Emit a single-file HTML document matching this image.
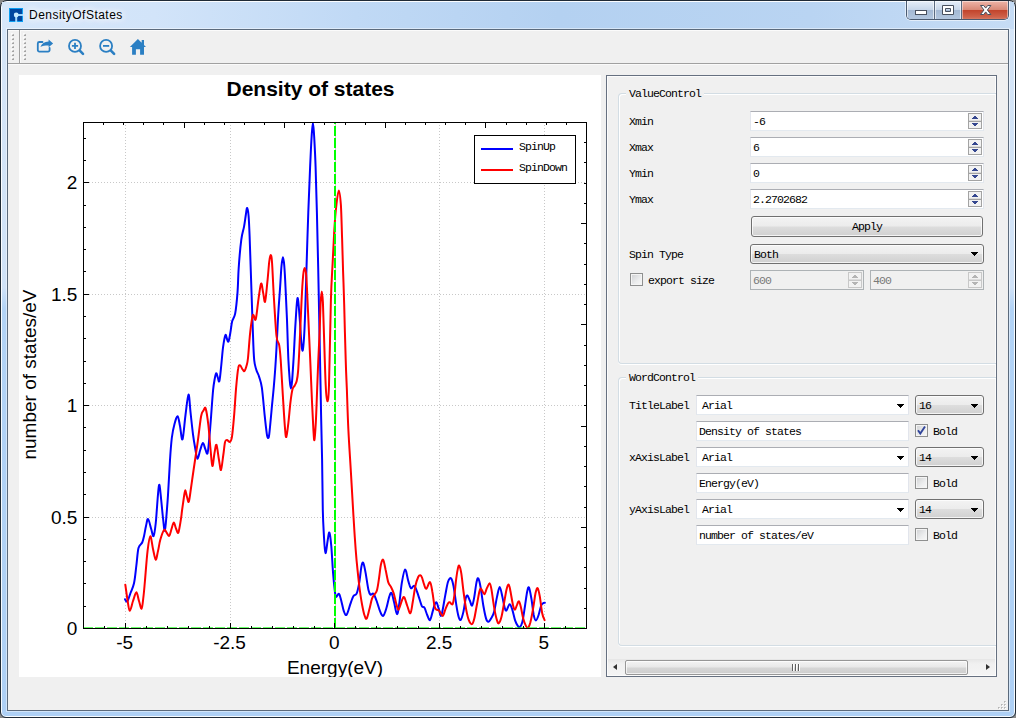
<!DOCTYPE html>
<html lang="en">
<head>
<meta charset="utf-8">
<title>DensityOfStates</title>
<style>
*{box-sizing:border-box;margin:0;padding:0}
html,body{width:1016px;height:718px;overflow:hidden;background:#8a8a8a}
body{position:relative;font-family:"Liberation Mono","DejaVu Sans Mono",monospace;font-size:12px;color:#000}
.abs{position:absolute}
#win{position:absolute;left:0;top:0;width:1016px;height:718px;border:1px solid #1f2a36;border-radius:7px 7px 6px 6px;
 background:linear-gradient(180deg,#d6e6f8 0%,#d0e2f7 40%,#b2d3f6 43%,#aed0f5 100%);
 box-shadow:inset 0 0 0 1px rgba(255,255,255,.9);overflow:hidden}
#tbar{position:absolute;left:2px;top:2px;width:1012px;height:27px;background:linear-gradient(90deg,#d6e7fa 0%,#d2e4f9 15%,#c0d9f5 35%,#b4d1f1 55%,#b9d4f2 80%,#c6dcf5 100%)}
#client{position:absolute;left:8px;top:30px;width:1000px;height:680px;background:#f0f0f0;box-shadow:0 0 0 1px #5b6a7c,0 0 0 2px rgba(255,255,255,.45)}
#title{position:absolute;left:29px;top:7px;font-family:"Liberation Sans",sans-serif;font-size:12px;line-height:16px;color:#000;letter-spacing:.47px;text-shadow:0 0 6px #fff,0 0 8px #fff,0 0 10px #fff}
.s{position:absolute;font-family:"Liberation Mono","DejaVu Sans Mono",monospace;font-size:11.5px;line-height:12px;letter-spacing:-0.9px;white-space:pre;color:#000}
.plot{position:absolute;left:19px;top:75px}
/* toolbar */
#tbline{position:absolute;left:8px;top:63px;width:1000px;height:1px;background:#a0a0a0}
.tsep{position:absolute;top:30px;width:1px;height:33px;background:#a0a0a0}
.grip{position:absolute;top:34px;width:2px;height:26px;background:repeating-linear-gradient(180deg,#b0b0b0 0,#b0b0b0 2px,transparent 2px,transparent 4px)}
/* right panel */
#frame{position:absolute;left:606px;top:75px;width:391px;height:602px;border:1px solid #667080;box-shadow:inset 0 0 0 1px #fcfcfc;background:#f0f0f0}
.gb{position:absolute;border:1px solid #d3dde4;border-radius:4px;box-shadow:inset 1px 1px 0 #fff, 0 1px 0 #fff}
.gbt{background:#f0f0f0;padding:0 2px 0 3px}
.spin{position:absolute;height:20px;background:#fff;border:1px solid #e2e5ec;border-top-color:#abadb3;border-bottom-color:#e3e9ef}
.spin.dis{background:#f0f0f0;border:1px solid #adb2b5}
.sb{position:absolute;right:1px;top:2px;width:14px;height:16px;border:1px solid #a9a9a9;background:#f3f3f3}
.sb:before{content:"";position:absolute;left:0;top:7px;width:12px;height:1px;background:#a9a9a9}
.sb i{position:absolute;left:3px;width:0;height:0;border-left:3.5px solid transparent;border-right:3.5px solid transparent}
.sb i.u{top:2px;border-bottom:4px solid #3a4f9a}
.sb i.d{top:10px;border-top:4px solid #3a4f9a}
.dis .sb{border-color:#c4c4c4;background:#f4f4f4}
.dis .sb:before{background:#c4c4c4}
.dis .sb i.u{border-bottom-color:#b0b0b0}
.dis .sb i.d{border-top-color:#b0b0b0}
.btn{position:absolute;border:1px solid #707070;border-radius:3px;background:linear-gradient(180deg,#f3f3f3 0%,#ececec 48%,#dddddd 52%,#d0d0d0 100%);box-shadow:inset 0 0 0 1px rgba(255,255,255,.75)}
.arr{position:absolute;width:0;height:0;border-left:3.5px solid transparent;border-right:3.5px solid transparent;border-top:4px solid #000}
.cb{position:absolute;width:13px;height:13px;border:1px solid #8e8f8f;background:linear-gradient(135deg,#cfd0d2 0%,#ecedee 60%,#f8f8f8 100%);box-shadow:inset 0 0 0 1px #f4f4f4}
.le{position:absolute;height:20px;background:#fff;border:1px solid #e2e5ec;border-top-color:#abadb3;border-bottom-color:#e3e9ef}
</style>
</head>
<body>
<div id="win"></div>
<div id="tbar"></div>
<div id="client"></div>
<svg class="abs" style="left:9px;top:8px" width="14" height="14" viewBox="0 0 14 14">
<rect x="0" y="0" width="14" height="14" fill="#0a9cf0"/><rect x="1" y="1" width="12" height="12" fill="#0046a0"/>
<rect x="7" y="6" width="7" height="2" fill="#9fd8ff"/><rect x="6.2" y="7" width="2" height="7" fill="#9fd8ff"/><circle cx="7.2" cy="7" r="2.4" fill="#c8ebff"/></svg>
<div id="title">DensityOfStates</div>
<div class="abs" style="left:906px;top:1px;width:103px;height:19px;border:1px solid #4a5a70;border-top:none;border-radius:0 0 5px 5px;overflow:hidden;box-shadow:0 1px 0 rgba(255,255,255,.55),1px 0 0 rgba(255,255,255,.55),-1px 0 0 rgba(255,255,255,.55)">
<div class="abs" style="left:0;top:0;width:27px;height:19px;background:linear-gradient(180deg,#e6eef8 0%,#c8d7ea 45%,#a4b9d4 50%,#b4c8e0 100%);box-shadow:inset 0 0 0 1px rgba(255,255,255,.6)"></div>
<div class="abs" style="left:27px;top:0;width:1px;height:19px;background:#5a6a80"></div>
<div class="abs" style="left:28px;top:0;width:26px;height:19px;background:linear-gradient(180deg,#e6eef8 0%,#c8d7ea 45%,#a4b9d4 50%,#b4c8e0 100%);box-shadow:inset 0 0 0 1px rgba(255,255,255,.6)"></div>
<div class="abs" style="left:54px;top:0;width:1px;height:19px;background:#5a6a80"></div>
<div class="abs" style="left:55px;top:0;width:46px;height:19px;background:linear-gradient(180deg,#eeb5a8 0%,#d98a78 45%,#c2452d 50%,#cf634c 85%,#d98873 100%);box-shadow:inset 0 0 0 1px rgba(255,255,255,.45)"></div>
<svg class="abs" style="left:0;top:0" width="101" height="19" viewBox="907 1 101 19">
<rect x="915.5" y="10.5" width="11" height="4" fill="#fff" stroke="#48505e"/>
<path d="M942.5 5.500h11v9h-11zM945.5 8.500v3h5v-3z" fill="#fff" fill-rule="evenodd" stroke="#48505e"/>
<path d="M980.500 5.500h3.200l2 2.600 2-2.600h3.200l-3.500 4.500 3.500 4.500h-3.200l-2-2.600-2 2.600h-3.200l3.500-4.500z" fill="#fff" stroke="#48505e" stroke-width="1" stroke-linejoin="round"/>
</svg></div>
<div class="abs" style="left:8px;top:30px;width:1000px;height:1px;background:#fbfbfb"></div><div id="tbline"></div><div class="abs" style="left:8px;top:64px;width:1000px;height:1px;background:#fafafa"></div>
<div class="tsep" style="left:19px"></div><div class="tsep" style="left:20px;background:#fafafa"></div>
<svg class="abs" style="left:11px;top:33px" width="4" height="28" viewBox="0 0 4 28" shape-rendering="crispEdges"><rect x="0" y="0" width="2" height="2" fill="#fafafa"/><rect x="2" y="1" width="1" height="1" fill="#b6b6b6"/><rect x="1" y="2" width="2" height="1" fill="#a4a4a4"/><rect x="1" y="1" width="1" height="1" fill="#dcdcdc"/><rect x="0" y="4" width="2" height="2" fill="#fafafa"/><rect x="2" y="5" width="1" height="1" fill="#b6b6b6"/><rect x="1" y="6" width="2" height="1" fill="#a4a4a4"/><rect x="1" y="5" width="1" height="1" fill="#dcdcdc"/><rect x="0" y="8" width="2" height="2" fill="#fafafa"/><rect x="2" y="9" width="1" height="1" fill="#b6b6b6"/><rect x="1" y="10" width="2" height="1" fill="#a4a4a4"/><rect x="1" y="9" width="1" height="1" fill="#dcdcdc"/><rect x="0" y="12" width="2" height="2" fill="#fafafa"/><rect x="2" y="13" width="1" height="1" fill="#b6b6b6"/><rect x="1" y="14" width="2" height="1" fill="#a4a4a4"/><rect x="1" y="13" width="1" height="1" fill="#dcdcdc"/><rect x="0" y="16" width="2" height="2" fill="#fafafa"/><rect x="2" y="17" width="1" height="1" fill="#b6b6b6"/><rect x="1" y="18" width="2" height="1" fill="#a4a4a4"/><rect x="1" y="17" width="1" height="1" fill="#dcdcdc"/><rect x="0" y="20" width="2" height="2" fill="#fafafa"/><rect x="2" y="21" width="1" height="1" fill="#b6b6b6"/><rect x="1" y="22" width="2" height="1" fill="#a4a4a4"/><rect x="1" y="21" width="1" height="1" fill="#dcdcdc"/><rect x="0" y="24" width="2" height="2" fill="#fafafa"/><rect x="2" y="25" width="1" height="1" fill="#b6b6b6"/><rect x="1" y="26" width="2" height="1" fill="#a4a4a4"/><rect x="1" y="25" width="1" height="1" fill="#dcdcdc"/></svg><svg class="abs" style="left:23px;top:33px" width="4" height="28" viewBox="0 0 4 28" shape-rendering="crispEdges"><rect x="0" y="0" width="2" height="2" fill="#fafafa"/><rect x="2" y="1" width="1" height="1" fill="#b6b6b6"/><rect x="1" y="2" width="2" height="1" fill="#a4a4a4"/><rect x="1" y="1" width="1" height="1" fill="#dcdcdc"/><rect x="0" y="4" width="2" height="2" fill="#fafafa"/><rect x="2" y="5" width="1" height="1" fill="#b6b6b6"/><rect x="1" y="6" width="2" height="1" fill="#a4a4a4"/><rect x="1" y="5" width="1" height="1" fill="#dcdcdc"/><rect x="0" y="8" width="2" height="2" fill="#fafafa"/><rect x="2" y="9" width="1" height="1" fill="#b6b6b6"/><rect x="1" y="10" width="2" height="1" fill="#a4a4a4"/><rect x="1" y="9" width="1" height="1" fill="#dcdcdc"/><rect x="0" y="12" width="2" height="2" fill="#fafafa"/><rect x="2" y="13" width="1" height="1" fill="#b6b6b6"/><rect x="1" y="14" width="2" height="1" fill="#a4a4a4"/><rect x="1" y="13" width="1" height="1" fill="#dcdcdc"/><rect x="0" y="16" width="2" height="2" fill="#fafafa"/><rect x="2" y="17" width="1" height="1" fill="#b6b6b6"/><rect x="1" y="18" width="2" height="1" fill="#a4a4a4"/><rect x="1" y="17" width="1" height="1" fill="#dcdcdc"/><rect x="0" y="20" width="2" height="2" fill="#fafafa"/><rect x="2" y="21" width="1" height="1" fill="#b6b6b6"/><rect x="1" y="22" width="2" height="1" fill="#a4a4a4"/><rect x="1" y="21" width="1" height="1" fill="#dcdcdc"/><rect x="0" y="24" width="2" height="2" fill="#fafafa"/><rect x="2" y="25" width="1" height="1" fill="#b6b6b6"/><rect x="1" y="26" width="2" height="1" fill="#a4a4a4"/><rect x="1" y="25" width="1" height="1" fill="#dcdcdc"/></svg>
<svg class="abs" style="left:30px;top:32px" width="124" height="30" viewBox="30 32 124 30">
<g fill="none" stroke="#2b7fc3" stroke-width="1.8" stroke-linecap="round" stroke-linejoin="round">
<path d="M42.500 42h-3.200a1.500 1.500 0 0 0 -1.500 1.500v6.600a1.500 1.500 0 0 0 1.500 1.500h8.800a1.500 1.500 0 0 0 1.500 -1.500v-2.200"/>
<circle cx="75" cy="45.900" r="6"/><path d="M71.900 45.900h6.200M75 42.800v6.200" stroke-linecap="butt"/><path d="M79.800 50.600l3.200 3.200" stroke-width="2.600"/>
<circle cx="106.100" cy="45.900" r="6"/><path d="M103 45.900h6.200" stroke-linecap="butt"/><path d="M110.900 50.600l3.200 3.200" stroke-width="2.600"/>
</g>
<path d="M40.400 46.900c1.200-3.600 4-5.400 8.200-5.500v-1.900l4.500 3.900-4.500 3.900v-1.900c-3.600 0-6.200.4-8.200 1.500z" fill="#2b7fc3"/>
<path d="M137.900 39l-8 8.100h2.200v7.600h3.800v-5.400h4.200v5.400h3.900v-7.600h2l-2-2v-5h-2.300v2.700z" fill="#2b7fc3"/>
</svg>
<svg class="plot" width="582" height="602" viewBox="19 75 582 602" shape-rendering="auto">
<rect x="19" y="75" width="582" height="602" fill="#fff"/>
<g stroke="#c8c8c8" stroke-width="1" stroke-dasharray="1 2" shape-rendering="crispEdges"><line x1="125.5" y1="122" x2="125.5" y2="628"/><line x1="230.5" y1="122" x2="230.5" y2="628"/><line x1="439.5" y1="122" x2="439.5" y2="628"/><line x1="544.5" y1="122" x2="544.5" y2="628"/><line x1="83" y1="182.5" x2="586" y2="182.5"/><line x1="83" y1="294.5" x2="586" y2="294.5"/><line x1="83" y1="405.5" x2="586" y2="405.5"/><line x1="83" y1="517.5" x2="586" y2="517.5"/></g>
<line x1="335.5" y1="122" x2="335.5" y2="628" stroke="#c8c8c8" shape-rendering="crispEdges"/>
<clipPath id="cp"><rect x="83" y="122" width="504" height="507"/></clipPath>
<g clip-path="url(#cp)" fill="none" stroke-width="2" stroke-linejoin="round" stroke-linecap="round">
<path d="M125.0 599.2C125.4 599.6 126.4 602.4 127.3 601.4C128.2 600.4 129.4 596.0 130.5 593.0C131.6 590.0 133.0 587.8 134.0 583.3C135.0 578.8 135.6 571.9 136.3 566.0C137.1 560.1 137.5 551.9 138.5 548.0C139.5 544.1 141.3 544.5 142.2 542.5C143.1 540.5 143.4 539.0 144.0 536.2C144.6 533.5 145.3 528.9 146.0 526.0C146.7 523.1 147.2 518.5 148.1 519.0C149.0 519.5 150.3 526.1 151.2 529.0C152.1 531.9 152.8 537.1 153.6 536.2C154.3 535.3 155.2 527.9 155.7 523.5C156.2 519.1 156.4 515.2 156.8 510.0C157.2 504.8 157.8 496.2 158.2 492.0C158.6 487.8 159.0 483.7 159.5 485.0C160.0 486.3 160.6 494.5 161.2 500.0C161.8 505.5 162.4 512.9 163.0 518.0C163.6 523.1 164.2 531.3 164.8 530.8C165.4 530.3 166.0 521.0 166.5 515.0C167.0 509.0 167.4 504.2 168.0 495.0C168.6 485.8 169.4 469.5 170.0 460.0C170.6 450.5 171.1 444.0 171.8 438.0C172.6 432.0 173.5 427.6 174.5 424.0C175.5 420.4 176.7 415.9 177.6 416.2C178.5 416.5 179.2 422.1 180.0 426.0C180.8 429.9 181.6 441.2 182.5 439.4C183.4 437.6 184.5 422.5 185.5 415.0C186.5 407.5 187.7 395.0 188.5 394.5C189.3 394.0 189.8 405.4 190.5 412.0C191.2 418.6 192.2 428.0 193.0 434.3C193.8 440.6 194.8 445.9 195.5 450.0C196.2 454.1 196.7 458.8 197.5 458.8C198.3 458.8 199.3 452.6 200.2 450.0C201.1 447.4 202.1 443.2 202.9 443.0C203.8 442.8 204.5 447.3 205.3 449.0C206.1 450.7 206.8 455.1 207.5 453.3C208.2 451.5 208.7 444.2 209.3 438.0C209.9 431.8 210.5 424.2 211.1 416.2C211.7 408.2 212.5 396.2 213.1 390.0C213.7 383.8 214.2 381.8 214.7 379.0C215.2 376.2 215.7 373.4 216.2 373.2C216.7 372.9 217.3 376.2 217.8 377.5C218.3 378.8 218.8 383.1 219.4 381.0C220.0 378.9 220.7 370.7 221.3 365.0C221.9 359.3 222.4 351.9 223.1 346.9C223.8 341.9 224.8 336.4 225.4 335.1C226.1 333.8 226.5 337.9 227.0 339.0C227.5 340.1 227.9 342.5 228.5 341.5C229.1 340.5 229.7 336.3 230.3 333.0C230.9 329.7 231.3 324.9 232.1 321.6C232.9 318.3 234.3 318.2 235.2 313.4C236.1 308.6 236.9 300.2 237.5 292.6C238.1 285.0 238.1 276.8 238.7 268.0C239.3 259.2 240.4 246.4 241.3 239.6C242.2 232.8 243.2 231.0 244.0 226.9C244.8 222.8 245.3 218.2 245.8 215.0C246.3 211.8 246.7 207.7 247.2 207.9C247.7 208.1 248.2 211.3 248.6 216.0C249.0 220.7 249.3 228.3 249.6 236.0C249.9 243.7 250.2 252.7 250.5 262.0C250.8 271.3 251.1 280.3 251.5 292.0C251.9 303.7 252.5 321.1 252.9 332.4C253.3 343.7 253.6 353.8 254.2 360.0C254.8 366.2 255.5 366.9 256.3 369.7C257.1 372.5 258.2 373.7 259.1 376.7C260.0 379.7 261.0 381.4 261.9 387.9C262.8 394.4 263.9 408.0 264.7 415.7C265.5 423.4 266.3 430.1 266.8 433.8C267.3 437.5 267.5 438.0 267.9 438.0C268.3 438.0 268.7 438.7 269.3 433.8C269.9 428.9 271.0 416.4 271.7 408.7C272.4 401.0 273.0 396.0 273.7 387.9C274.4 379.8 275.1 372.1 275.8 360.0C276.6 347.9 277.5 327.1 278.2 315.0C278.9 302.9 279.6 295.4 280.1 287.2C280.7 279.0 281.0 271.0 281.5 266.0C282.0 261.0 282.4 257.3 282.9 257.3C283.4 257.3 283.9 261.0 284.3 266.0C284.7 271.0 285.1 278.2 285.5 287.2C285.9 296.2 286.5 307.9 287.0 320.0C287.5 332.1 287.9 349.9 288.4 360.0C288.9 370.1 289.4 376.1 289.8 380.9C290.2 385.7 290.5 388.6 290.9 388.6C291.3 388.6 291.7 385.7 292.1 380.9C292.5 376.1 292.9 369.6 293.5 360.0C294.1 350.4 294.8 333.7 295.5 323.4C296.2 313.1 296.8 299.1 297.5 298.0C298.2 296.9 299.0 309.7 299.6 317.0C300.2 324.3 300.8 336.4 301.3 342.0C301.8 347.6 302.2 351.2 302.7 350.5C303.1 349.8 303.6 344.0 304.0 338.0C304.4 332.0 304.7 326.0 305.1 314.3C305.5 302.6 306.0 285.0 306.5 268.0C307.0 251.0 307.7 229.2 308.3 212.4C308.9 195.6 309.6 179.8 310.1 167.2C310.7 154.6 311.1 144.4 311.6 137.0C312.1 129.6 312.5 122.8 312.9 122.8C313.3 122.8 313.8 129.6 314.2 137.0C314.6 144.4 315.2 154.6 315.6 167.2C316.1 179.8 316.5 195.6 316.9 212.4C317.3 229.2 317.8 248.0 318.2 268.0C318.6 288.0 319.0 307.8 319.5 332.4C320.0 357.0 320.7 394.4 321.1 415.7C321.5 437.0 321.8 444.3 322.1 460.0C322.4 475.7 322.5 497.1 322.8 510.0C323.1 522.9 323.6 530.0 324.0 537.2C324.4 544.4 324.9 552.5 325.5 553.1C326.1 553.7 327.0 544.2 327.6 540.8C328.2 537.4 328.8 531.7 329.4 532.6C330.0 533.5 330.7 539.4 331.3 546.2C331.9 553.0 332.5 565.9 333.1 573.4C333.7 580.9 334.4 587.6 334.9 591.5C335.4 595.4 335.4 596.5 336.1 596.9C336.8 597.3 338.1 593.2 339.0 593.8C339.9 594.4 340.4 597.6 341.2 600.5C342.0 603.4 343.0 609.0 343.9 611.4C344.8 613.8 345.5 615.9 346.6 614.7C347.7 613.5 349.2 607.3 350.3 604.2C351.4 601.1 352.4 597.8 353.5 596.0C354.6 594.2 355.6 596.0 356.6 593.7C357.6 591.4 358.5 587.0 359.3 582.4C360.1 577.8 360.8 569.4 361.5 566.1C362.2 562.9 362.6 561.7 363.3 562.9C364.0 564.1 364.9 568.9 365.7 573.4C366.5 577.9 367.6 586.2 368.4 589.7C369.2 593.2 369.7 594.0 370.5 594.7C371.3 595.4 372.4 592.8 373.4 593.8C374.4 594.8 375.4 597.6 376.5 600.5C377.6 603.4 379.0 608.8 380.1 611.4C381.2 614.0 382.1 616.5 383.2 615.9C384.3 615.3 385.5 611.0 386.5 607.8C387.5 604.6 388.4 599.4 389.2 596.9C390.0 594.4 390.7 592.0 391.5 592.9C392.3 593.8 393.2 598.8 394.1 602.3C395.0 605.8 396.1 613.8 397.0 614.1C397.9 614.4 398.4 609.5 399.2 604.2C400.0 598.9 400.9 588.2 401.9 582.4C402.9 576.6 404.1 569.7 405.1 569.4C406.2 569.1 407.2 577.5 408.2 580.6C409.2 583.7 409.8 587.3 410.9 588.2C411.9 589.1 413.3 584.9 414.5 586.0C415.7 587.1 417.0 591.8 418.2 595.1C419.4 598.4 420.8 603.9 421.8 606.0C422.9 608.1 423.6 606.3 424.5 607.8C425.4 609.3 426.3 613.0 427.2 615.0C428.1 617.0 429.1 620.7 430.0 620.1C430.9 619.5 431.9 614.0 432.7 611.4C433.5 608.8 434.1 605.7 434.8 604.2C435.5 602.8 436.0 601.8 436.7 602.7C437.4 603.6 438.2 607.5 439.0 609.6C439.8 611.7 440.3 617.8 441.4 615.4C442.4 613.0 444.2 600.8 445.3 595.1C446.4 589.5 447.1 584.3 448.1 581.5C449.1 578.7 450.2 577.6 451.1 578.4C452.0 579.1 452.6 581.7 453.5 586.0C454.4 590.3 455.4 599.2 456.2 604.2C457.0 609.2 457.6 613.3 458.4 615.9C459.1 618.5 459.8 620.6 460.7 619.9C461.6 619.1 462.7 614.9 463.5 611.4C464.3 607.9 465.0 601.4 465.6 598.7C466.2 596.1 466.7 595.2 467.4 595.5C468.1 595.8 469.0 598.8 469.8 600.5C470.6 602.2 471.4 606.2 472.1 605.6C472.9 605.0 473.6 600.8 474.3 596.9C475.0 593.0 475.8 585.5 476.5 582.4C477.2 579.3 477.6 577.5 478.3 578.4C479.0 579.3 479.9 583.3 480.7 587.9C481.5 592.5 482.5 600.9 483.4 606.0C484.3 611.1 485.3 616.0 486.1 618.6C486.9 621.2 487.5 621.9 488.4 621.7C489.3 621.6 490.5 619.4 491.5 617.7C492.5 616.0 493.3 614.9 494.2 611.4C495.1 607.9 496.1 601.0 497.0 596.9C497.9 592.8 498.8 587.0 499.7 587.0C500.6 587.0 501.6 593.4 502.4 596.9C503.2 600.4 504.0 605.5 504.7 607.8C505.4 610.1 505.7 611.1 506.5 610.5C507.3 609.9 508.6 604.4 509.6 604.2C510.6 604.1 511.4 606.9 512.3 609.6C513.2 612.3 514.2 617.7 515.1 620.4C516.0 623.1 517.0 624.8 517.8 625.9C518.5 627.0 518.9 627.9 519.6 627.3C520.4 626.7 521.4 625.8 522.3 622.3C523.2 618.8 524.2 611.1 525.0 606.0C525.8 600.9 526.5 594.6 527.2 591.5C527.9 588.4 528.3 586.3 529.0 587.5C529.7 588.7 530.6 594.1 531.4 598.7C532.2 603.3 533.0 611.4 533.7 615.0C534.5 618.6 535.1 620.4 535.9 620.4C536.7 620.4 537.8 617.4 538.6 615.0C539.5 612.6 540.2 608.0 541.0 606.0C541.8 604.0 542.5 603.8 543.1 603.2C543.8 602.7 544.6 602.8 544.9 602.7" stroke="#0000ff"/>
<path d="M125.3 584.7C125.7 587.2 126.8 595.6 127.5 600.0C128.2 604.4 128.9 610.6 129.8 610.8C130.7 611.0 131.9 604.1 133.0 601.0C134.1 597.9 135.4 592.3 136.4 592.3C137.4 592.3 138.1 598.3 139.0 601.0C139.9 603.7 140.9 609.1 141.6 608.6C142.3 608.1 142.8 602.5 143.3 598.0C143.9 593.5 144.2 589.4 144.9 581.5C145.6 573.6 146.7 558.2 147.6 550.7C148.5 543.2 149.4 536.5 150.3 536.2C151.2 535.9 152.1 545.1 153.0 549.0C153.9 552.9 154.9 559.4 155.7 559.7C156.5 560.0 157.2 554.3 158.0 551.0C158.8 547.7 159.3 543.3 160.3 539.8C161.3 536.3 163.1 531.0 164.2 529.9C165.3 528.8 166.0 532.0 166.8 533.0C167.7 534.0 168.5 536.5 169.3 535.8C170.1 535.1 170.8 531.2 171.5 529.0C172.2 526.8 173.1 522.7 173.8 522.6C174.6 522.5 175.2 526.8 176.0 528.5C176.8 530.2 177.6 534.3 178.4 532.6C179.2 530.9 180.5 521.9 181.1 518.1C181.7 514.3 181.6 513.4 182.1 510.0C182.6 506.6 183.3 501.3 183.8 498.0C184.3 494.7 184.7 490.6 185.2 490.4C185.7 490.2 186.4 495.1 187.0 497.0C187.6 498.9 188.1 503.2 188.8 501.7C189.5 500.2 190.2 493.2 191.0 488.0C191.8 482.8 192.4 477.9 193.5 470.5C194.6 463.1 196.2 452.4 197.5 443.4C198.8 434.3 200.1 421.7 201.1 416.2C202.1 410.7 202.7 411.8 203.5 410.5C204.3 409.2 204.9 406.1 205.7 408.6C206.5 411.1 207.6 418.6 208.4 425.3C209.2 432.0 209.8 442.2 210.5 449.0C211.2 455.8 211.7 465.3 212.4 466.0C213.1 466.7 213.8 456.5 214.5 453.0C215.2 449.5 215.8 443.6 216.5 444.8C217.2 446.0 218.2 455.8 219.0 460.0C219.8 464.2 220.3 470.8 221.0 470.0C221.7 469.2 222.6 459.6 223.3 455.0C224.0 450.4 224.4 444.7 225.0 442.2C225.6 439.7 226.3 440.2 227.1 440.1C227.9 440.1 229.1 442.5 229.9 441.9C230.7 441.3 231.3 441.0 232.0 436.6C232.7 432.2 233.4 423.8 234.1 415.7C234.8 407.6 235.4 395.8 236.1 387.9C236.8 380.0 237.5 372.2 238.2 368.4C238.8 364.6 239.3 365.2 240.0 365.3C240.7 365.4 241.7 368.1 242.4 369.1C243.2 370.1 243.8 371.7 244.5 371.1C245.2 370.5 246.0 367.8 246.6 365.6C247.2 363.4 247.4 363.5 248.0 358.0C248.6 352.5 249.4 339.5 250.2 332.4C251.0 325.3 252.0 317.4 252.9 315.2C253.8 313.0 254.8 322.0 255.7 319.4C256.6 316.8 257.5 305.8 258.4 299.8C259.3 293.8 260.3 284.6 261.1 283.5C261.9 282.4 262.5 290.0 263.2 293.0C263.9 296.0 264.4 303.5 265.1 301.6C265.8 299.7 266.7 288.3 267.4 281.7C268.1 275.1 268.7 266.4 269.2 262.0C269.7 257.6 270.1 255.0 270.6 255.0C271.1 255.0 271.5 255.1 272.0 262.0C272.5 268.9 273.1 283.9 273.8 296.2C274.6 308.5 275.6 327.9 276.5 336.0C277.4 344.1 278.5 341.1 279.2 345.1C279.9 349.1 280.1 351.7 280.7 360.0C281.3 368.3 282.1 383.7 282.8 394.8C283.5 405.9 284.3 419.9 284.9 426.9C285.5 433.9 285.7 437.7 286.3 437.0C286.9 436.3 287.7 428.6 288.4 422.7C289.1 416.8 289.8 407.4 290.5 401.8C291.2 396.2 291.8 391.9 292.5 389.2C293.2 386.5 293.9 387.2 294.6 385.8C295.3 384.4 296.1 383.3 296.7 380.9C297.3 378.4 297.7 376.2 298.1 371.1C298.5 366.0 298.7 362.4 299.3 350.5C299.9 338.6 301.0 312.6 301.6 300.0C302.2 287.4 302.7 280.3 303.2 275.0C303.7 269.7 304.2 268.1 304.7 268.1C305.2 268.1 305.7 269.7 306.2 275.0C306.7 280.3 306.9 286.7 307.5 300.0C308.1 313.3 309.2 338.0 310.0 355.0C310.8 372.0 311.4 389.4 312.0 401.8C312.6 414.2 313.0 423.2 313.4 429.6C313.8 436.0 314.0 441.2 314.4 440.1C314.8 439.0 315.3 431.4 315.8 422.7C316.3 414.0 316.8 398.3 317.2 387.9C317.6 377.4 317.9 369.2 318.3 360.0C318.7 350.8 319.2 342.1 319.6 332.4C320.0 322.7 320.3 308.8 320.7 302.0C321.1 295.2 321.4 291.5 321.8 291.5C322.2 291.5 322.5 295.2 322.9 302.0C323.2 308.8 323.4 318.6 323.9 332.4C324.4 346.2 325.1 373.5 325.7 385.0C326.2 396.5 326.6 401.3 327.2 401.3C327.8 401.3 328.4 401.9 329.0 385.0C329.6 368.1 330.3 320.2 330.9 300.0C331.5 279.8 332.0 275.2 332.6 263.6C333.2 252.0 333.7 239.9 334.3 230.1C334.9 220.3 335.6 211.6 336.4 205.0C337.1 198.4 338.1 190.4 338.8 190.4C339.6 190.4 340.3 197.0 340.9 205.0C341.4 213.0 341.7 227.3 342.1 238.5C342.5 249.7 342.8 260.8 343.1 271.9C343.5 283.0 343.8 290.4 344.2 305.0C344.6 319.6 345.2 345.4 345.7 359.6C346.1 373.8 346.4 378.2 346.9 390.0C347.3 401.8 347.7 416.1 348.4 430.3C349.1 444.6 350.3 461.4 351.1 475.5C351.9 489.6 352.8 504.7 353.4 515.0C354.0 525.3 354.3 529.6 354.8 537.2C355.3 544.8 355.9 552.6 356.6 560.7C357.4 568.8 358.4 578.8 359.3 586.0C360.2 593.2 361.1 599.4 362.0 604.2C362.9 609.0 363.6 612.6 364.4 615.0C365.2 617.4 365.8 619.5 366.6 618.6C367.4 617.7 368.4 612.9 369.3 609.6C370.2 606.3 371.1 601.3 372.0 598.7C372.9 596.1 373.8 595.7 374.7 594.2C375.6 592.7 376.4 592.6 377.1 589.7C377.9 586.8 378.6 581.2 379.2 577.0C379.8 572.8 380.3 567.2 381.0 564.3C381.7 561.4 382.4 558.9 383.2 559.8C384.0 560.7 384.8 566.0 385.6 569.8C386.5 573.6 387.4 579.5 388.3 582.4C389.2 585.3 390.1 585.2 391.0 587.0C391.9 588.8 392.8 590.4 393.7 593.3C394.6 596.2 395.6 601.5 396.4 604.2C397.2 606.9 397.7 610.2 398.6 609.6C399.5 609.0 401.0 602.5 401.9 600.5C402.8 598.5 403.3 596.4 404.2 597.3C405.1 598.2 406.3 603.4 407.3 606.0C408.3 608.6 409.5 613.8 410.4 613.2C411.3 612.6 411.9 606.8 412.7 602.3C413.5 597.8 414.5 590.2 415.4 586.0C416.3 581.8 417.4 578.8 418.2 577.0C419.0 575.2 419.7 575.1 420.3 575.2C420.9 575.3 421.4 576.0 422.0 577.5C422.6 579.0 423.3 582.3 424.0 584.2C424.7 586.1 425.3 589.1 426.3 588.8C427.3 588.4 429.0 581.6 430.0 582.1C431.0 582.6 431.6 587.5 432.3 591.5C433.1 595.5 433.8 603.0 434.5 606.0C435.2 609.0 435.6 608.9 436.3 609.6C437.1 610.4 437.9 609.5 439.0 610.5C440.1 611.5 441.6 616.0 442.6 615.9C443.7 615.8 444.4 611.7 445.3 609.6C446.2 607.5 447.3 604.4 448.1 603.2C448.9 602.0 449.1 602.1 449.9 602.3C450.6 602.5 451.9 605.4 452.6 604.2C453.4 603.0 453.8 599.3 454.4 595.1C455.0 590.9 455.6 583.3 456.2 578.8C456.8 574.3 457.5 570.1 458.0 567.9C458.5 565.7 458.8 564.9 459.3 565.8C459.9 566.7 460.6 569.1 461.3 573.4C462.0 577.7 462.7 585.5 463.5 591.5C464.3 597.5 465.3 604.8 466.2 609.6C467.1 614.4 467.9 618.0 468.9 620.4C469.9 622.8 471.1 624.4 472.0 624.1C472.9 623.8 473.5 621.9 474.3 618.6C475.1 615.3 476.1 608.7 477.0 604.2C477.9 599.7 478.7 594.1 479.4 591.5C480.1 588.9 480.4 588.3 481.2 588.8C482.0 589.2 483.3 594.4 484.3 594.2C485.3 594.1 486.1 589.7 487.0 587.9C487.9 586.1 488.9 583.0 489.7 583.3C490.4 583.6 490.8 585.6 491.5 589.7C492.2 593.8 493.3 602.7 494.2 607.8C495.1 612.9 496.2 617.8 497.0 620.4C497.8 623.0 498.1 623.8 498.8 623.2C499.6 622.6 500.6 620.3 501.5 616.8C502.4 613.3 503.4 606.8 504.2 602.3C505.0 597.8 505.8 592.7 506.5 589.7C507.2 586.8 508.0 584.3 508.7 584.6C509.4 584.9 509.8 587.9 510.5 591.5C511.2 595.1 512.4 603.0 513.2 606.0C514.0 609.0 514.5 609.8 515.1 609.6C515.7 609.5 516.2 606.5 516.9 605.1C517.5 603.7 518.3 601.0 519.0 601.4C519.7 601.8 520.3 604.9 521.0 607.8C521.7 610.7 522.4 615.6 523.2 618.6C524.0 621.6 525.1 624.4 525.9 625.9C526.7 627.4 527.4 628.3 528.1 627.7C528.9 627.1 529.5 625.6 530.4 622.3C531.2 619.0 532.4 612.6 533.2 607.8C534.1 603.0 534.8 596.6 535.5 593.3C536.2 590.0 537.0 587.6 537.7 588.2C538.4 588.8 539.1 592.7 539.9 596.9C540.6 601.1 541.4 609.3 542.2 613.2C543.0 617.1 544.2 619.0 544.6 620.1" stroke="#ff0000"/>
<line x1="335" y1="628" x2="335" y2="122" stroke="#00ff00" stroke-width="2" stroke-dasharray="10 2" stroke-linecap="butt"/>
<line x1="83" y1="627.5" x2="587" y2="627.5" stroke="#00ff00" stroke-width="1" stroke-dasharray="10 2" stroke-opacity=".6" stroke-linecap="butt"/>
</g>
<g stroke="#000" stroke-width="1" shape-rendering="crispEdges"><rect x="83.5" y="122.5" width="503" height="506" fill="none"/><line x1="104.5" y1="628" x2="104.5" y2="626"/><line x1="125.5" y1="628" x2="125.5" y2="623"/><line x1="146.5" y1="628" x2="146.5" y2="626"/><line x1="167.5" y1="628" x2="167.5" y2="626"/><line x1="188.5" y1="628" x2="188.5" y2="626"/><line x1="209.5" y1="628" x2="209.5" y2="626"/><line x1="230.5" y1="628" x2="230.5" y2="623"/><line x1="251.5" y1="628" x2="251.5" y2="626"/><line x1="272.5" y1="628" x2="272.5" y2="626"/><line x1="293.5" y1="628" x2="293.5" y2="626"/><line x1="314.5" y1="628" x2="314.5" y2="626"/><line x1="334.5" y1="628" x2="334.5" y2="623"/><line x1="355.5" y1="628" x2="355.5" y2="626"/><line x1="376.5" y1="628" x2="376.5" y2="626"/><line x1="397.5" y1="628" x2="397.5" y2="626"/><line x1="418.5" y1="628" x2="418.5" y2="626"/><line x1="439.5" y1="628" x2="439.5" y2="623"/><line x1="460.5" y1="628" x2="460.5" y2="626"/><line x1="481.5" y1="628" x2="481.5" y2="626"/><line x1="502.5" y1="628" x2="502.5" y2="626"/><line x1="523.5" y1="628" x2="523.5" y2="626"/><line x1="544.5" y1="628" x2="544.5" y2="623"/><line x1="565.5" y1="628" x2="565.5" y2="626"/><line x1="83" y1="606.5" x2="86" y2="606.5"/><line x1="83" y1="583.5" x2="86" y2="583.5"/><line x1="83" y1="561.5" x2="86" y2="561.5"/><line x1="83" y1="539.5" x2="86" y2="539.5"/><line x1="83" y1="517.5" x2="89" y2="517.5"/><line x1="83" y1="494.5" x2="86" y2="494.5"/><line x1="83" y1="472.5" x2="86" y2="472.5"/><line x1="83" y1="450.5" x2="86" y2="450.5"/><line x1="83" y1="427.5" x2="86" y2="427.5"/><line x1="83" y1="405.5" x2="89" y2="405.5"/><line x1="83" y1="383.5" x2="86" y2="383.5"/><line x1="83" y1="361.5" x2="86" y2="361.5"/><line x1="83" y1="338.5" x2="86" y2="338.5"/><line x1="83" y1="316.5" x2="86" y2="316.5"/><line x1="83" y1="294.5" x2="89" y2="294.5"/><line x1="83" y1="271.5" x2="86" y2="271.5"/><line x1="83" y1="249.5" x2="86" y2="249.5"/><line x1="83" y1="227.5" x2="86" y2="227.5"/><line x1="83" y1="205.5" x2="86" y2="205.5"/><line x1="83" y1="182.5" x2="89" y2="182.5"/><line x1="83" y1="160.5" x2="86" y2="160.5"/><line x1="83" y1="138.5" x2="86" y2="138.5"/><line x1="103.5" y1="122" x2="103.5" y2="125"/><line x1="123.5" y1="122" x2="123.5" y2="125"/><line x1="143.5" y1="122" x2="143.5" y2="125"/><line x1="163.5" y1="122" x2="163.5" y2="125"/><line x1="184.5" y1="122" x2="184.5" y2="128"/><line x1="204.5" y1="122" x2="204.5" y2="125"/><line x1="224.5" y1="122" x2="224.5" y2="125"/><line x1="244.5" y1="122" x2="244.5" y2="125"/><line x1="264.5" y1="122" x2="264.5" y2="125"/><line x1="284.5" y1="122" x2="284.5" y2="128"/><line x1="304.5" y1="122" x2="304.5" y2="125"/><line x1="324.5" y1="122" x2="324.5" y2="125"/><line x1="345.5" y1="122" x2="345.5" y2="125"/><line x1="365.5" y1="122" x2="365.5" y2="125"/><line x1="385.5" y1="122" x2="385.5" y2="128"/><line x1="405.5" y1="122" x2="405.5" y2="125"/><line x1="425.5" y1="122" x2="425.5" y2="125"/><line x1="445.5" y1="122" x2="445.5" y2="125"/><line x1="465.5" y1="122" x2="465.5" y2="125"/><line x1="485.5" y1="122" x2="485.5" y2="128"/><line x1="506.5" y1="122" x2="506.5" y2="125"/><line x1="526.5" y1="122" x2="526.5" y2="125"/><line x1="546.5" y1="122" x2="546.5" y2="125"/><line x1="566.5" y1="122" x2="566.5" y2="125"/><line x1="587" y1="608.5" x2="584" y2="608.5"/><line x1="587" y1="588.5" x2="584" y2="588.5"/><line x1="587" y1="567.5" x2="584" y2="567.5"/><line x1="587" y1="547.5" x2="584" y2="547.5"/><line x1="587" y1="527.5" x2="581" y2="527.5"/><line x1="587" y1="507.5" x2="584" y2="507.5"/><line x1="587" y1="486.5" x2="584" y2="486.5"/><line x1="587" y1="466.5" x2="584" y2="466.5"/><line x1="587" y1="446.5" x2="584" y2="446.5"/><line x1="587" y1="426.5" x2="581" y2="426.5"/><line x1="587" y1="405.5" x2="584" y2="405.5"/><line x1="587" y1="385.5" x2="584" y2="385.5"/><line x1="587" y1="365.5" x2="584" y2="365.5"/><line x1="587" y1="345.5" x2="584" y2="345.5"/><line x1="587" y1="324.5" x2="581" y2="324.5"/><line x1="587" y1="304.5" x2="584" y2="304.5"/><line x1="587" y1="284.5" x2="584" y2="284.5"/><line x1="587" y1="264.5" x2="584" y2="264.5"/><line x1="587" y1="243.5" x2="584" y2="243.5"/><line x1="587" y1="223.5" x2="581" y2="223.5"/><line x1="587" y1="203.5" x2="584" y2="203.5"/><line x1="587" y1="183.5" x2="584" y2="183.5"/><line x1="587" y1="162.5" x2="584" y2="162.5"/><line x1="587" y1="142.5" x2="584" y2="142.5"/></g>
<g font-family="Liberation Sans, Arial, sans-serif" font-size="19" fill="#000">
<text x="124.7" y="648.5" text-anchor="middle">-5</text>
<text x="229.5" y="648.5" text-anchor="middle">-2.5</text>
<text x="334.3" y="648.5" text-anchor="middle">0</text>
<text x="439.1" y="648.5" text-anchor="middle">2.5</text>
<text x="543.9" y="648.5" text-anchor="middle">5</text>
<text x="77.3" y="635.2" text-anchor="end">0</text>
<text x="77.3" y="524.2" text-anchor="end">0.5</text>
<text x="77.3" y="412.2" text-anchor="end">1</text>
<text x="77.3" y="301.2" text-anchor="end">1.5</text>
<text x="77.3" y="189.2" text-anchor="end">2</text>
</g>
<text x="335" y="674" text-anchor="middle" font-family="Liberation Sans, Arial, sans-serif" font-size="19" fill="#000">Energy(eV)</text>
<text transform="translate(36 374.5) rotate(-90)" text-anchor="middle" font-family="Liberation Sans, Arial, sans-serif" font-size="19" fill="#000">number of states/eV</text>
<text x="310.5" y="95.5" text-anchor="middle" font-family="Liberation Sans, Arial, sans-serif" font-weight="bold" font-size="21" fill="#000">Density of states</text>
<rect x="474.5" y="135.5" width="101" height="48" fill="#fff" stroke="#000" shape-rendering="crispEdges"/>
<line x1="481" y1="149" x2="513" y2="149" stroke="#0000ff" stroke-width="2"/>
<line x1="481" y1="170" x2="513" y2="170" stroke="#ff0000" stroke-width="2"/>
<g font-family="Liberation Mono, monospace" font-size="11.5" letter-spacing="-0.9" fill="#000"><text x="519" y="150">SpinUp</text><text x="519" y="171">SpinDown</text></g>
</svg>
<div id="frame"></div>
<div class="gb" style="left:618px;top:93px;width:378px;height:271px;border-right:none;border-radius:4px 0 0 4px"></div>
<div class="s" style="left:626px;top:88px;background:#f0f0f0;padding:0 3px">ValueControl</div>
<div class="gb" style="left:618px;top:377px;width:378px;height:269px;border-right:none;border-radius:4px 0 0 4px"></div>
<div class="s" style="left:626px;top:372px;background:#f0f0f0;padding:0 3px">WordControl</div>
<div class="s" style="left:629px;top:116px">Xmin</div>
<div class="spin" style="left:750px;top:111px;width:234px"></div><svg class="abs" style="left:968px;top:113px" width="14" height="16" viewBox="0 0 14 16" shape-rendering="crispEdges"><rect x="0.5" y="0.5" width="13" height="15" fill="#f2f2f2" stroke="#a3a3a3"/><rect x="1" y="8" width="12" height="1" fill="#a3a3a3"/><rect x="1" y="7" width="12" height="1" fill="#dcdcdc"/><g fill="#35478f"><rect x="6" y="3" width="2" height="1"/><rect x="5" y="4" width="4" height="1"/><rect x="4" y="5" width="6" height="1"/><rect x="4" y="10" width="6" height="1"/><rect x="5" y="11" width="4" height="1"/><rect x="6" y="12" width="2" height="1"/></g></svg><div class="s" style="left:753px;top:116px;color:#000">-6</div>
<div class="s" style="left:629px;top:142px">Xmax</div>
<div class="spin" style="left:750px;top:137px;width:234px"></div><svg class="abs" style="left:968px;top:139px" width="14" height="16" viewBox="0 0 14 16" shape-rendering="crispEdges"><rect x="0.5" y="0.5" width="13" height="15" fill="#f2f2f2" stroke="#a3a3a3"/><rect x="1" y="8" width="12" height="1" fill="#a3a3a3"/><rect x="1" y="7" width="12" height="1" fill="#dcdcdc"/><g fill="#35478f"><rect x="6" y="3" width="2" height="1"/><rect x="5" y="4" width="4" height="1"/><rect x="4" y="5" width="6" height="1"/><rect x="4" y="10" width="6" height="1"/><rect x="5" y="11" width="4" height="1"/><rect x="6" y="12" width="2" height="1"/></g></svg><div class="s" style="left:753px;top:142px;color:#000">6</div>
<div class="s" style="left:629px;top:168px">Ymin</div>
<div class="spin" style="left:750px;top:163px;width:234px"></div><svg class="abs" style="left:968px;top:165px" width="14" height="16" viewBox="0 0 14 16" shape-rendering="crispEdges"><rect x="0.5" y="0.5" width="13" height="15" fill="#f2f2f2" stroke="#a3a3a3"/><rect x="1" y="8" width="12" height="1" fill="#a3a3a3"/><rect x="1" y="7" width="12" height="1" fill="#dcdcdc"/><g fill="#35478f"><rect x="6" y="3" width="2" height="1"/><rect x="5" y="4" width="4" height="1"/><rect x="4" y="5" width="6" height="1"/><rect x="4" y="10" width="6" height="1"/><rect x="5" y="11" width="4" height="1"/><rect x="6" y="12" width="2" height="1"/></g></svg><div class="s" style="left:753px;top:168px;color:#000">0</div>
<div class="s" style="left:629px;top:194px">Ymax</div>
<div class="spin" style="left:750px;top:189px;width:234px"></div><svg class="abs" style="left:968px;top:191px" width="14" height="16" viewBox="0 0 14 16" shape-rendering="crispEdges"><rect x="0.5" y="0.5" width="13" height="15" fill="#f2f2f2" stroke="#a3a3a3"/><rect x="1" y="8" width="12" height="1" fill="#a3a3a3"/><rect x="1" y="7" width="12" height="1" fill="#dcdcdc"/><g fill="#35478f"><rect x="6" y="3" width="2" height="1"/><rect x="5" y="4" width="4" height="1"/><rect x="4" y="5" width="6" height="1"/><rect x="4" y="10" width="6" height="1"/><rect x="5" y="11" width="4" height="1"/><rect x="6" y="12" width="2" height="1"/></g></svg><div class="s" style="left:753px;top:194px;color:#000">2.2702682</div>
<div class="btn" style="left:751px;top:216px;width:232px;height:21px"></div>
<div class="s" style="left:852px;top:221px">Apply</div>
<div class="s" style="left:629px;top:249px">Spin Type</div>
<div class="btn" style="left:750px;top:244px;width:234px;height:20px"></div><svg class="abs" style="left:971px;top:252px" width="7" height="4" viewBox="0 0 7 4" shape-rendering="crispEdges"><rect x="0" y="0" width="7" height="1"/><rect x="1" y="1" width="5" height="1"/><rect x="2" y="2" width="3" height="1"/><rect x="3" y="3" width="1" height="1"/></svg>
<div class="s" style="left:754px;top:249px">Both</div>
<div class="cb" style="left:630px;top:273px"></div>
<div class="s" style="left:648px;top:275px">export size</div>
<div class="spin dis" style="left:750px;top:270px;width:114px"></div><svg class="abs" style="left:848px;top:272px" width="14" height="16" viewBox="0 0 14 16" shape-rendering="crispEdges"><rect x="0.5" y="0.5" width="13" height="15" fill="#f2f2f2" stroke="#c8c8c8"/><rect x="1" y="8" width="12" height="1" fill="#c8c8c8"/><rect x="1" y="7" width="12" height="1" fill="#dcdcdc"/><g fill="#b4b4b4"><rect x="6" y="3" width="2" height="1"/><rect x="5" y="4" width="4" height="1"/><rect x="4" y="5" width="6" height="1"/><rect x="4" y="10" width="6" height="1"/><rect x="5" y="11" width="4" height="1"/><rect x="6" y="12" width="2" height="1"/></g></svg><div class="s" style="left:753px;top:275px;color:#7a7a7a">600</div>
<div class="spin dis" style="left:870px;top:270px;width:114px"></div><svg class="abs" style="left:968px;top:272px" width="14" height="16" viewBox="0 0 14 16" shape-rendering="crispEdges"><rect x="0.5" y="0.5" width="13" height="15" fill="#f2f2f2" stroke="#c8c8c8"/><rect x="1" y="8" width="12" height="1" fill="#c8c8c8"/><rect x="1" y="7" width="12" height="1" fill="#dcdcdc"/><g fill="#b4b4b4"><rect x="6" y="3" width="2" height="1"/><rect x="5" y="4" width="4" height="1"/><rect x="4" y="5" width="6" height="1"/><rect x="4" y="10" width="6" height="1"/><rect x="5" y="11" width="4" height="1"/><rect x="6" y="12" width="2" height="1"/></g></svg><div class="s" style="left:873px;top:275px;color:#7a7a7a">400</div>
<div class="s" style="left:629px;top:400px">TitleLabel</div>
<div class="le" style="left:696px;top:395px;width:213px"></div><svg class="abs" style="left:897px;top:404px" width="7" height="4" viewBox="0 0 7 4" shape-rendering="crispEdges"><rect x="0" y="0" width="7" height="1"/><rect x="1" y="1" width="5" height="1"/><rect x="2" y="2" width="3" height="1"/><rect x="3" y="3" width="1" height="1"/></svg>
<div class="s" style="left:702px;top:400px">Arial</div>
<div class="btn" style="left:915px;top:395px;width:69px;height:20px"></div><svg class="abs" style="left:971px;top:404px" width="7" height="4" viewBox="0 0 7 4" shape-rendering="crispEdges"><rect x="0" y="0" width="7" height="1"/><rect x="1" y="1" width="5" height="1"/><rect x="2" y="2" width="3" height="1"/><rect x="3" y="3" width="1" height="1"/></svg>
<div class="s" style="left:919px;top:400px">16</div>
<div class="le" style="left:696px;top:421px;width:213px"></div>
<div class="s" style="left:699px;top:426px">Density of states</div>
<div class="cb" style="left:915px;top:424px"></div>
<svg class="abs" style="left:915px;top:424px" width="13" height="13" viewBox="0 0 13 13"><path d="M3 6.200l2.300 3.300 4.700-7" fill="none" stroke="#31459b" stroke-width="1.900"/></svg>
<div class="s" style="left:933px;top:426px">Bold</div>
<div class="s" style="left:629px;top:452px">xAxisLabel</div>
<div class="le" style="left:696px;top:447px;width:213px"></div><svg class="abs" style="left:897px;top:456px" width="7" height="4" viewBox="0 0 7 4" shape-rendering="crispEdges"><rect x="0" y="0" width="7" height="1"/><rect x="1" y="1" width="5" height="1"/><rect x="2" y="2" width="3" height="1"/><rect x="3" y="3" width="1" height="1"/></svg>
<div class="s" style="left:702px;top:452px">Arial</div>
<div class="btn" style="left:915px;top:447px;width:69px;height:20px"></div><svg class="abs" style="left:971px;top:456px" width="7" height="4" viewBox="0 0 7 4" shape-rendering="crispEdges"><rect x="0" y="0" width="7" height="1"/><rect x="1" y="1" width="5" height="1"/><rect x="2" y="2" width="3" height="1"/><rect x="3" y="3" width="1" height="1"/></svg>
<div class="s" style="left:919px;top:452px">14</div>
<div class="le" style="left:696px;top:473px;width:213px"></div>
<div class="s" style="left:699px;top:478px">Energy(eV)</div>
<div class="cb" style="left:915px;top:476px"></div>
<div class="s" style="left:933px;top:478px">Bold</div>
<div class="s" style="left:629px;top:504px">yAxisLabel</div>
<div class="le" style="left:696px;top:499px;width:213px"></div><svg class="abs" style="left:897px;top:508px" width="7" height="4" viewBox="0 0 7 4" shape-rendering="crispEdges"><rect x="0" y="0" width="7" height="1"/><rect x="1" y="1" width="5" height="1"/><rect x="2" y="2" width="3" height="1"/><rect x="3" y="3" width="1" height="1"/></svg>
<div class="s" style="left:702px;top:504px">Arial</div>
<div class="btn" style="left:915px;top:499px;width:69px;height:20px"></div><svg class="abs" style="left:971px;top:508px" width="7" height="4" viewBox="0 0 7 4" shape-rendering="crispEdges"><rect x="0" y="0" width="7" height="1"/><rect x="1" y="1" width="5" height="1"/><rect x="2" y="2" width="3" height="1"/><rect x="3" y="3" width="1" height="1"/></svg>
<div class="s" style="left:919px;top:504px">14</div>
<div class="le" style="left:696px;top:525px;width:213px"></div>
<div class="s" style="left:699px;top:530px">number of states/eV</div>
<div class="cb" style="left:915px;top:528px"></div>
<div class="s" style="left:933px;top:530px">Bold</div>
<div class="abs" style="left:608px;top:659px;width:387px;height:16px;background:linear-gradient(180deg,#e6e6e6 0%,#f0f0f0 30%,#f4f4f4 100%)"></div>
<div class="abs" style="left:625px;top:660px;width:343px;height:15px;border:1px solid #979797;border-radius:2px;background:linear-gradient(180deg,#f4f4f4 0%,#e9e9e9 45%,#d6d6d6 55%,#cdcdcd 100%);box-shadow:inset 0 0 0 1px rgba(255,255,255,.7)"></div>
<div class="abs" style="left:792px;top:664px;width:1px;height:7px;background:#606060;box-shadow:3px 0 0 #606060,6px 0 0 #606060,1px 0 0 #fff,4px 0 0 #fff,7px 0 0 #fff"></div>
<div class="abs" style="left:613px;top:664px;width:0;height:0;border-top:3.5px solid transparent;border-bottom:3.5px solid transparent;border-right:4px solid #303030"></div>
<div class="abs" style="left:986px;top:664px;width:0;height:0;border-top:3.5px solid transparent;border-bottom:3.5px solid transparent;border-left:4px solid #303030"></div>
<div class="abs" style="left:1004px;top:707px;width:1px;height:1px;background:#b4b4b4;box-shadow:1px 1px 0 #fff,1px 0 0 #c8c8c8,0 1px 0 #c8c8c8"></div><div class="abs" style="left:1001px;top:707px;width:1px;height:1px;background:#b4b4b4;box-shadow:1px 1px 0 #fff,1px 0 0 #c8c8c8,0 1px 0 #c8c8c8"></div><div class="abs" style="left:998px;top:707px;width:1px;height:1px;background:#b4b4b4;box-shadow:1px 1px 0 #fff,1px 0 0 #c8c8c8,0 1px 0 #c8c8c8"></div><div class="abs" style="left:1004px;top:704px;width:1px;height:1px;background:#b4b4b4;box-shadow:1px 1px 0 #fff,1px 0 0 #c8c8c8,0 1px 0 #c8c8c8"></div><div class="abs" style="left:1001px;top:704px;width:1px;height:1px;background:#b4b4b4;box-shadow:1px 1px 0 #fff,1px 0 0 #c8c8c8,0 1px 0 #c8c8c8"></div><div class="abs" style="left:1004px;top:701px;width:1px;height:1px;background:#b4b4b4;box-shadow:1px 1px 0 #fff,1px 0 0 #c8c8c8,0 1px 0 #c8c8c8"></div>
</body>
</html>
